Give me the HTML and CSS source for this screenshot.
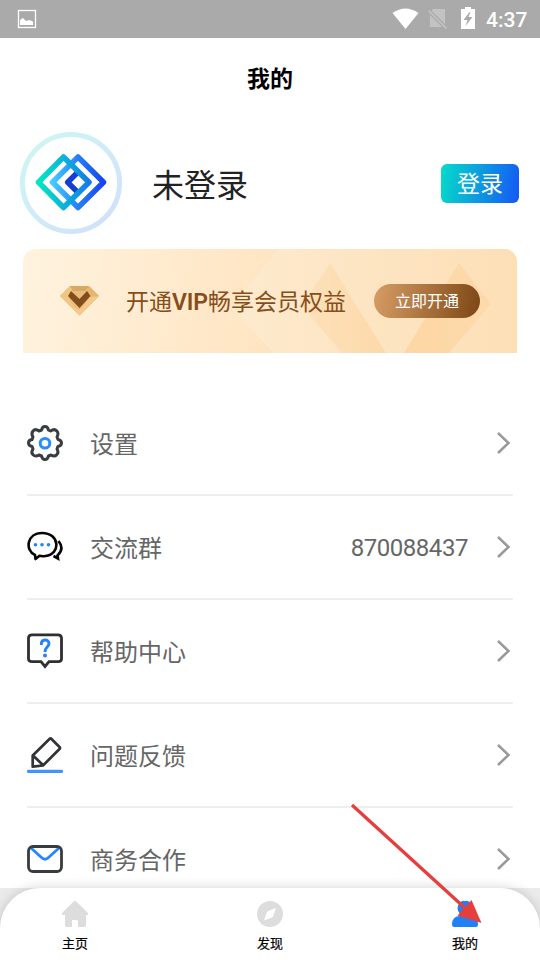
FILE: index.html
```html
<!DOCTYPE html>
<html lang="zh-CN">
<head>
<meta charset="utf-8">
<title>我的</title>
<link rel="stylesheet" href="styles.css">
</head>
<body>
<div class="phone">
  <header class="status">
    <svg class="status-image" width="20" height="20" viewBox="0 0 20 20"><rect x="1.500" y="1.500" width="17" height="17" fill="none" stroke="#fff" stroke-width="1.300"/><path d="M3 16v-4l1-2 2-1 3 3 3-1 3 1 1 1v3z" fill="#fff"/></svg>
    <svg class="status-icons" width="92" height="30" viewBox="388 4 92 30"><path d="M392.500 13Q405.500 4 418.500 13L405.500 29Z" fill="#fff"/><path d="M433 9h12v18h-15V14z" fill="#c3c3c3"/><path d="M427.500 9.500L447 29" stroke="#aaa" stroke-width="4"/><path d="M428.500 10.500L446.500 28.500" stroke="#c3c3c3" stroke-width="1.700"/><path d="M461 9h4V7h6v2h4v20h-14z" fill="#fff"/><path d="M469.500 12l-6 8h4l-2 6 7-9h-4l2-5z" fill="#aaa"/></svg>
    <span class="clock">4:37</span>
  </header>
  <main class="content">
    <h1 class="title">我的</h1>
    <section class="profile">
      <svg width="102" height="102" viewBox="20 132 102 102">
        <defs>
          <linearGradient id="ring" x1="0" y1="0" x2="1" y2="1"><stop stop-color="#cdf8f2"/><stop offset="1" stop-color="#d1dffc"/></linearGradient>
          <linearGradient id="teal"><stop stop-color="#00e6c3"/><stop offset=".5" stop-color="#0bb4d9"/><stop offset="1" stop-color="#147bea"/></linearGradient>
          <linearGradient id="blue"><stop stop-color="#43ccff"/><stop offset=".5" stop-color="#267ff8"/><stop offset="1" stop-color="#1643f4"/></linearGradient>
        </defs>
        <circle cx="71" cy="183" r="48.500" fill="#fff" stroke="url(#ring)" stroke-width="5"/>
        <g fill="none" stroke-width="5.500" stroke-linejoin="round">
          <path d="M78 157L103.500 182.300 78 207.500 52.500 182.300z" stroke="url(#blue)"/>
          <path d="M77 173l-9.300 9.300 9.300 9.300" stroke="#133fd6"/>
          <path d="M63.500 157L89 182.300 63.500 207.500 38.500 182.300z" stroke="url(#teal)"/>
        </g>
      </svg>
      <span class="name">未登录</span>
      <button class="login">登录</button>
    </section>
    <section class="vip">
      <svg class="facets" width="494" height="104" viewBox="23 249 494 104">
        <defs><linearGradient id="facet" x1="0" y1="0" x2="1" y2="0"><stop stop-color="#fdeace"/><stop offset="1" stop-color="#fddfb6"/></linearGradient>
        <linearGradient id="facet2" x1="0" y1="0" x2="1" y2="0"><stop stop-color="#fde1ba"/><stop offset="1" stop-color="#fdd9aa"/></linearGradient>
        <linearGradient id="facet3" x1="0" y1="0" x2="1" y2="0"><stop stop-color="#fdd6a3"/><stop offset="1" stop-color="#fddaac"/></linearGradient></defs>
        <path d="M278 249H517V353H274L231 308z" fill="url(#facet)"/>
        <path d="M330 263L386 353H342L302 306z" fill="url(#facet2)"/>
        <path d="M459 263L491 304 449 353H404z" fill="url(#facet3)"/>
      </svg>
      <svg class="gem" width="40" height="31" viewBox="59 285 40 31"><path d="M70 286h19l10 10-19.500 19.500L60 296z" fill="#eabc7b"/><path d="M60 296l10-10 2.500 5-3.500 7 10.500 17.500z" fill="#f1c584"/><path d="M70 286h19l-4 5H73z" fill="#d7a967"/><path d="M99 296l-19.500 19.500V307L90 295l-4-4 3-5z" fill="#e8b56f"/><path d="M99 296l-19.500 19.500L69 305l10.500 5L90 297z" fill="#f5c98c"/><path d="M71 291l8.500 8 7.500-8 3.500 5-11 12L68 296z" fill="#824d1d"/></svg>
      <span class="vip-text">开通<b>VIP</b>畅享会员权益</span>
      <button class="open">立即开通</button>
    </section>
    <ul class="menu">
      <li><svg class="icon" viewBox="0 0 36 36"><path d="M14.600 5C15 2.500 15.800 1.500 18 1.500S21 2.500 21.400 5L23.500 6C26.500 4 28 4 29.700 5.900 31.700 7.800 31.500 9.300 30 12l1 2.500C33.500 15 34.500 15.800 34.500 18S33.500 21 31 21.400L30 24c1.600 2.500 1.600 4-.3 5.700C28 31.700 26.500 31.500 24 30l-2.600 1C21 33.500 20.200 34.500 18 34.500S15 33.500 14.600 31L12 30c-2.500 1.600-4.200 1.500-6-.3C4.200 28 4.300 26.500 6 24l-1-2.600C2.500 21 1.500 20.200 1.500 18S2.500 15 5 14.600L6 12C4.300 9.300 4.300 8 6 6S9.500 4.200 12 6z" fill="none" stroke="#393c40" stroke-width="3" stroke-linejoin="round"/><circle cx="18" cy="18.300" r="4.800" fill="none" stroke="#2b8bff" stroke-width="3"/></svg><span class="label">设置</span><svg class="chevron" viewBox="0 0 14 22"><path d="M1 1l10.500 10L1 21"/></svg></li>
      <li><svg class="icon" viewBox="0 0 36 36"><path d="M8 26C-2.500 21 0 4 15 4c18 0 19 21 3.500 23-3.500.5-6-.2-6-.2L8.500 30z" fill="none" stroke="#050505" stroke-width="2.600" stroke-linejoin="round"/><path d="M31.500 12c4 5 4 10-1 14.500l.5 3-4.500-2.500" fill="none" stroke="#050505" stroke-width="2.600"/><g fill="#2680f5"><circle cx="8.500" cy="15.800" r="1.800"/><circle cx="15" cy="15.800" r="1.800"/><circle cx="21.500" cy="15.800" r="1.800"/></g></svg><span class="label">交流群</span><span class="value">870088437</span><svg class="chevron" viewBox="0 0 14 22"><path d="M1 1l10.500 10L1 21"/></svg></li>
      <li><svg class="icon" viewBox="0 0 36 36"><path d="M5 1.800h26q3.500 0 3.500 3.500v20.400q0 3-3.500 3H22L18 33.500l-4-4.800H5q-3.500 0-3.500-3V5.300Q1.500 1.800 5 1.800z" fill="none" stroke="#2d2f32" stroke-width="2.800"/><path d="M14.300 12C14 5.500 22 5.800 22 10.500c0 3.500-4 3-4 8.500" fill="none" stroke="#2383f8" stroke-width="2.900"/><circle cx="18" cy="22.500" r="2" fill="#2383f8"/></svg><span class="label">帮助中心</span><svg class="chevron" viewBox="0 0 14 22"><path d="M1 1l10.500 10L1 21"/></svg></li>
      <li><svg class="icon" viewBox="0 0 36 36"><path d="M22.500 2q1-1 2 0l8 8q1 1 0 2L16 28.500 5.700 29.700V18.500zM6 18.500L16.500 28.500" fill="none" stroke="#313337" stroke-width="2.700" stroke-linejoin="round"/><path d="M1.500 34.300h33" stroke="#3f94ff" stroke-width="3.200" stroke-linecap="round"/></svg><span class="label">问题反馈</span><svg class="chevron" viewBox="0 0 14 22"><path d="M1 1l10.500 10L1 21"/></svg></li>
      <li><svg class="icon" viewBox="0 0 36 36"><path d="M4 7l10.500 9.500q3.500 3.500 7 0L32 7" fill="none" stroke="#2586ff" stroke-width="2.800"/><rect x="1.500" y="5.500" width="33" height="25" rx="4.500" fill="none" stroke="#393c3f" stroke-width="2.800"/></svg><span class="label">商务合作</span><svg class="chevron" viewBox="0 0 14 22"><path d="M1 1l10.500 10L1 21"/></svg></li>
    </ul>
  </main>
  <div class="dock">
    <nav class="tabs">
      <a class="tab"><svg viewBox="0 0 26 26"><path d="M11.300.7q1.700-1.400 3.400 0L26 12v2h-2v10q0 2-2 2h-6v-6q0-1-1-1h-4q-1 0-1 1v6H5q-2 0-2-2V14H0v-2z" fill="#ddd"/></svg>主页</a>
      <a class="tab"><svg viewBox="0 0 26 26"><circle cx="13" cy="13" r="13" fill="#ddd"/><path d="M19 7l-2.800 8q-.4 1-1.400 1.500L7 19.500l2.700-8Q10 10.500 11 10z" fill="#fff"/></svg>发现</a>
      <a class="tab"><svg viewBox="0 0 26 26"><circle cx="13" cy="7" r="7.500" fill="#1f80f7"/><path d="M0 23q.5-8 8-8h10q7.500 0 8 8 0 3-2 3H2q-2 0-2-3z" fill="#1f80f7"/></svg>我的</a>
    </nav>
  </div>
  <svg class="arrow" width="134" height="124" viewBox="350 802 134 124"><path d="M352 805L466 909" stroke="#e63d3d" stroke-width="3.300"/><path d="M481.500 923L457.500 915.500 471.500 900z" fill="#e63d3d"/></svg>
</div>
</body>
</html>
```
FILE: styles.css
```css
* { box-sizing: border-box; }

body {
  margin: 0;
  background: #fff;
  font-family: Roboto, "Noto Sans CJK SC", sans-serif;
}

svg { display: block; flex: none; }

.phone {
  position: relative;
  display: flex;
  flex-direction: column;
  width: 540px;
  height: 960px;
  overflow: hidden;
}

.status {
  display: flex;
  align-items: center;
  height: 38px;
  flex: none;
  padding: 0 13px 0 17px;
  background: #aaa;
  color: #fff;
}

.status-icons { margin-left: auto; }

.clock {
  width: 41px;
  margin-left: 6px;
  padding-top: 2px;
  font-size: 21px;
  font-weight: 500;
  line-height: 36px;
  white-space: nowrap;
}

.content {
  flex: 1;
  min-height: 0;
  overflow: hidden;
}

.title {
  height: 80px;
  margin: 0;
  padding-top: 2px;
  font-size: 23px;
  font-weight: 700;
  line-height: 80px;
  text-align: center;
}

.profile {
  display: flex;
  align-items: center;
  height: 102px;
  margin-top: 14px;
  padding: 0 21px 0 20px;
}

.name {
  margin-left: 30px;
  color: #222;
  font-size: 32px;
}

button {
  padding: 0;
  border: 0;
  color: #fff;
  font-family: inherit;
}

.login {
  width: 78px;
  height: 39px;
  margin-left: auto;
  padding-top: 2px;
  border-radius: 6px;
  background: linear-gradient(100deg, #05dcca, #1557f6);
  font-size: 23px;
  line-height: 37px;
}

.vip {
  position: relative;
  display: flex;
  align-items: center;
  height: 104px;
  margin: 15px 23px 0;
  padding: 0 37px 0 36px;
  overflow: hidden;
  border-radius: 13px 13px 0 0;
  background: linear-gradient(100deg, #fff3df, #ffe2bd 58%);
}

.facets { position: absolute; inset: 0; }
.gem, .vip-text, .open { position: relative; }

.gem { margin-bottom: 2px; }

.vip-text {
  margin-left: 27px;
  padding-bottom: 2px;
  color: #864e1b;
  font-size: 23px;
  white-space: nowrap;
}

.vip-text b { font-weight: 600; letter-spacing: -.1px; }

.open {
  width: 106px;
  height: 34px;
  margin-left: auto;
  padding-top: 2px;
  border-radius: 17px;
  background: linear-gradient(100deg, #d79d66, #7c4715);
  font-size: 16px;
  line-height: 32px;
}

.menu {
  margin: 39px 27px 0;
  padding: 0;
  list-style: none;
}

.menu li {
  display: flex;
  align-items: center;
  height: 104px;
  border-bottom: 2px solid #eee;
  color: #666;
  font-size: 24px;
}

.label { padding-bottom: 2px; }

.icon {
  width: 36px;
  height: 36px;
  margin-right: 27px;
}

.value {
  margin-left: auto;
  padding-top: 2px;
  letter-spacing: -.45px;
}

.chevron {
  width: 14px;
  height: 22px;
  margin-right: 2px;
  margin-bottom: 1px;
  margin-left: auto;
  fill: none;
  stroke: #999;
  stroke-width: 2.5;
}

.value + .chevron { margin-left: 29px; }

.dock {
  height: 72px;
  flex: none;
  background: #ebebeb;
}

.tabs {
  display: flex;
  justify-content: space-between;
  height: 72px;
  padding: 13px 49px 0;
  border-radius: 40px 40px 0 0;
  background: #fff;
  box-shadow: 0 0 12px rgba(0, 0, 0, .18);
}

.tab {
  display: flex;
  flex-direction: column;
  align-items: center;
  width: 52px;
  color: #000;
  font-size: 13px;
  line-height: 20px;
  -webkit-text-stroke: .2px #000;
}

.tab svg {
  width: 26px;
  height: 26px;
  margin-bottom: 7px;
}

.arrow {
  position: absolute;
  top: 802px;
  left: 350px;
}
```
